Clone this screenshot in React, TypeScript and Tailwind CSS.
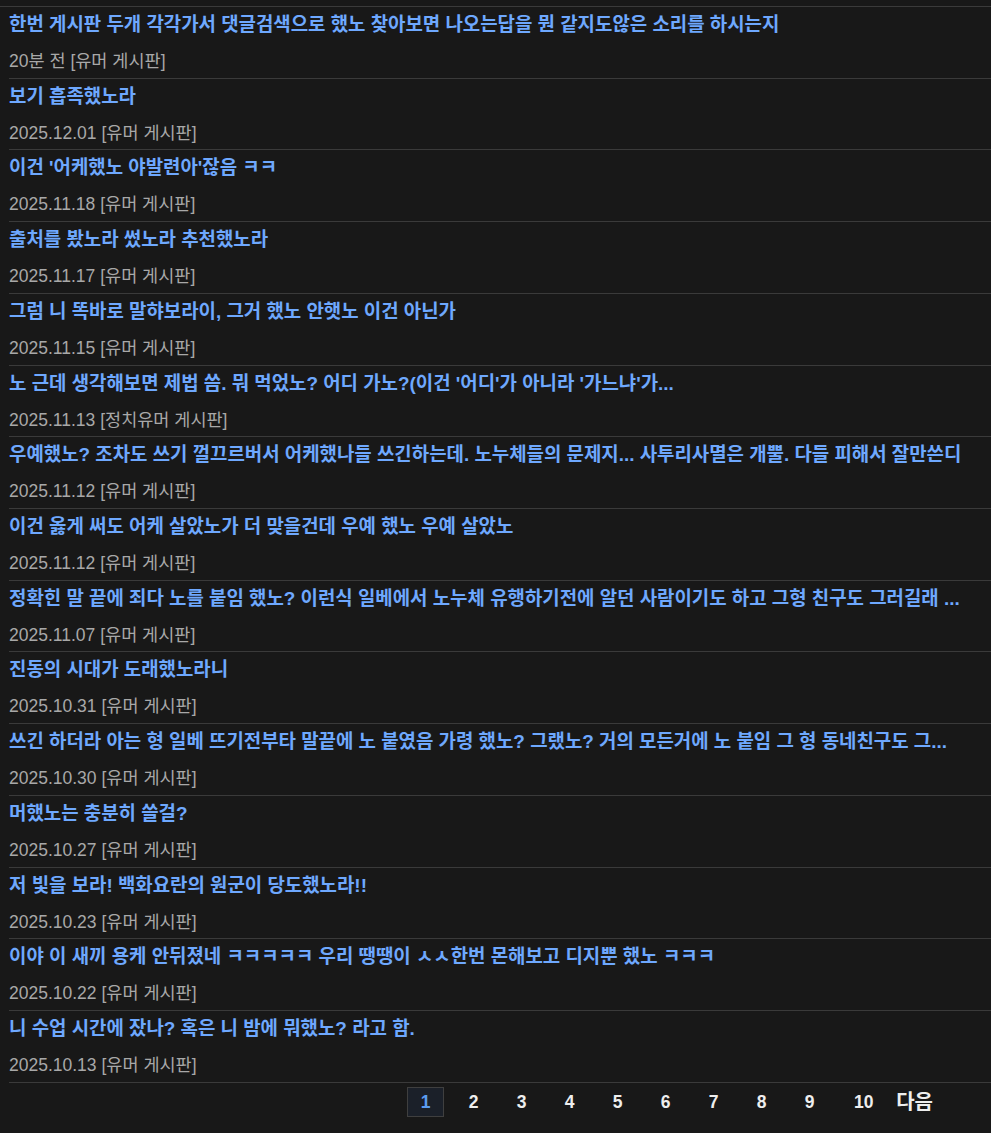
const posts = [
  { title: "한번 게시판 두개 각각가서 댓글검색으로 했노 찾아보면 나오는답을 뭔 같지도않은 소리를 하시는지", date: "20분 전", board: "유머 게시판" },
  { title: "보기 흡족했노라", date: "2025.12.01", board: "유머 게시판" },
  { title: "이건 '어케했노 야발련아'잖음 ㅋㅋ", date: "2025.11.18", board: "유머 게시판" },
  { title: "출처를 봤노라 썼노라 추천했노라", date: "2025.11.17", board: "유머 게시판" },
  { title: "그럼 니 똑바로 말햐보라이, 그거 했노 안햇노 이건 아닌가", date: "2025.11.15", board: "유머 게시판" },
  { title: "노 근데 생각해보면 제법 씀. 뭐 먹었노? 어디 가노?(이건 '어디'가 아니라 '가느냐'가...", date: "2025.11.13", board: "정치유머 게시판" },
  { title: "우예했노? 조차도 쓰기 껄끄르버서 어케했나들 쓰긴하는데. 노누체들의 문제지... 사투리사멸은 개뿔. 다들 피해서 잘만쓴디", date: "2025.11.12", board: "유머 게시판" },
  { title: "이건 옳게 써도 어케 살았노가 더 맞을건데 우예 했노 우예 살았노", date: "2025.11.12", board: "유머 게시판" },
  { title: "정확힌 말 끝에 죄다 노를 붙임 했노? 이런식 일베에서 노누체 유행하기전에 알던 사람이기도 하고 그형 친구도 그러길래 ...", date: "2025.11.07", board: "유머 게시판" },
  { title: "진동의 시대가 도래했노라니", date: "2025.10.31", board: "유머 게시판" },
  { title: "쓰긴 하더라 아는 형 일베 뜨기전부타 말끝에 노 붙였음 가령 했노? 그랬노? 거의 모든거에 노 붙임 그 형 동네친구도 그...", date: "2025.10.30", board: "유머 게시판" },
  { title: "머했노는 충분히 쓸걸?", date: "2025.10.27", board: "유머 게시판" },
  { title: "저 빛을 보라! 백화요란의 원군이 당도했노라!!", date: "2025.10.23", board: "유머 게시판" },
  { title: "이야 이 새끼 용케 안뒤졌네 ㅋㅋㅋㅋㅋ 우리 땡땡이 ㅅㅅ한번 몬해보고 디지뿐 했노 ㅋㅋㅋ", date: "2025.10.22", board: "유머 게시판" },
  { title: "니 수업 시간에 잤나? 혹은 니 밤에 뭐했노? 라고 함.", date: "2025.10.13", board: "유머 게시판" },
];

const pages = ["1", "2", "3", "4", "5", "6", "7", "8", "9", "10"];

export default function App() {
  return (
    <div
      className="min-h-screen bg-[#181818] pt-[6px]"
      style={{ fontFamily: '"Liberation Sans", "Noto Sans CJK KR", sans-serif' }}
    >
      <div className="border-t border-[#3a3a3a]" />
      <div className="pl-[9px]">
        {/* comment list */}
        <ul>
          {posts.map((p, i) => (
            <li key={i} className="border-b border-[#3a3a3a] pt-[4px] h-[71.73px] flex flex-col">
              <a href="#" className="text-[18.9px] leading-[27px] font-bold text-[#6ea8fe] whitespace-nowrap overflow-hidden">
                {p.title}
              </a>
              <div className="mt-[10px] text-[17.5px] leading-[26px] text-[#a8a8a8]">
                {p.date} [{p.board}]
              </div>
            </li>
          ))}
        </ul>

        {/* pagination */}
        <nav className="flex items-center justify-end pr-[58px] pt-[4px] gap-[11px]">
          {pages.map((n, i) => (
            <a
              key={n}
              href="#"
              className={
                i === 0
                  ? "h-[30px] w-[37px] flex items-center justify-center border border-[#3f3f3f] bg-[#1b2029] text-[17.5px] font-bold text-[#5b9cf0]"
                  : n === "10"
                  ? "h-[30px] w-[49px] flex items-center justify-center text-[17.5px] font-bold text-[#eeeeee]"
                  : "h-[30px] w-[37px] flex items-center justify-center text-[17.5px] font-bold text-[#eeeeee]"
              }
            >
              {n}
            </a>
          ))}
          <a href="#" className="h-[30px] ml-[-3px] flex items-center text-[20px] font-bold text-[#eeeeee]">
            다음
          </a>
        </nav>
      </div>
    </div>
  );
}
